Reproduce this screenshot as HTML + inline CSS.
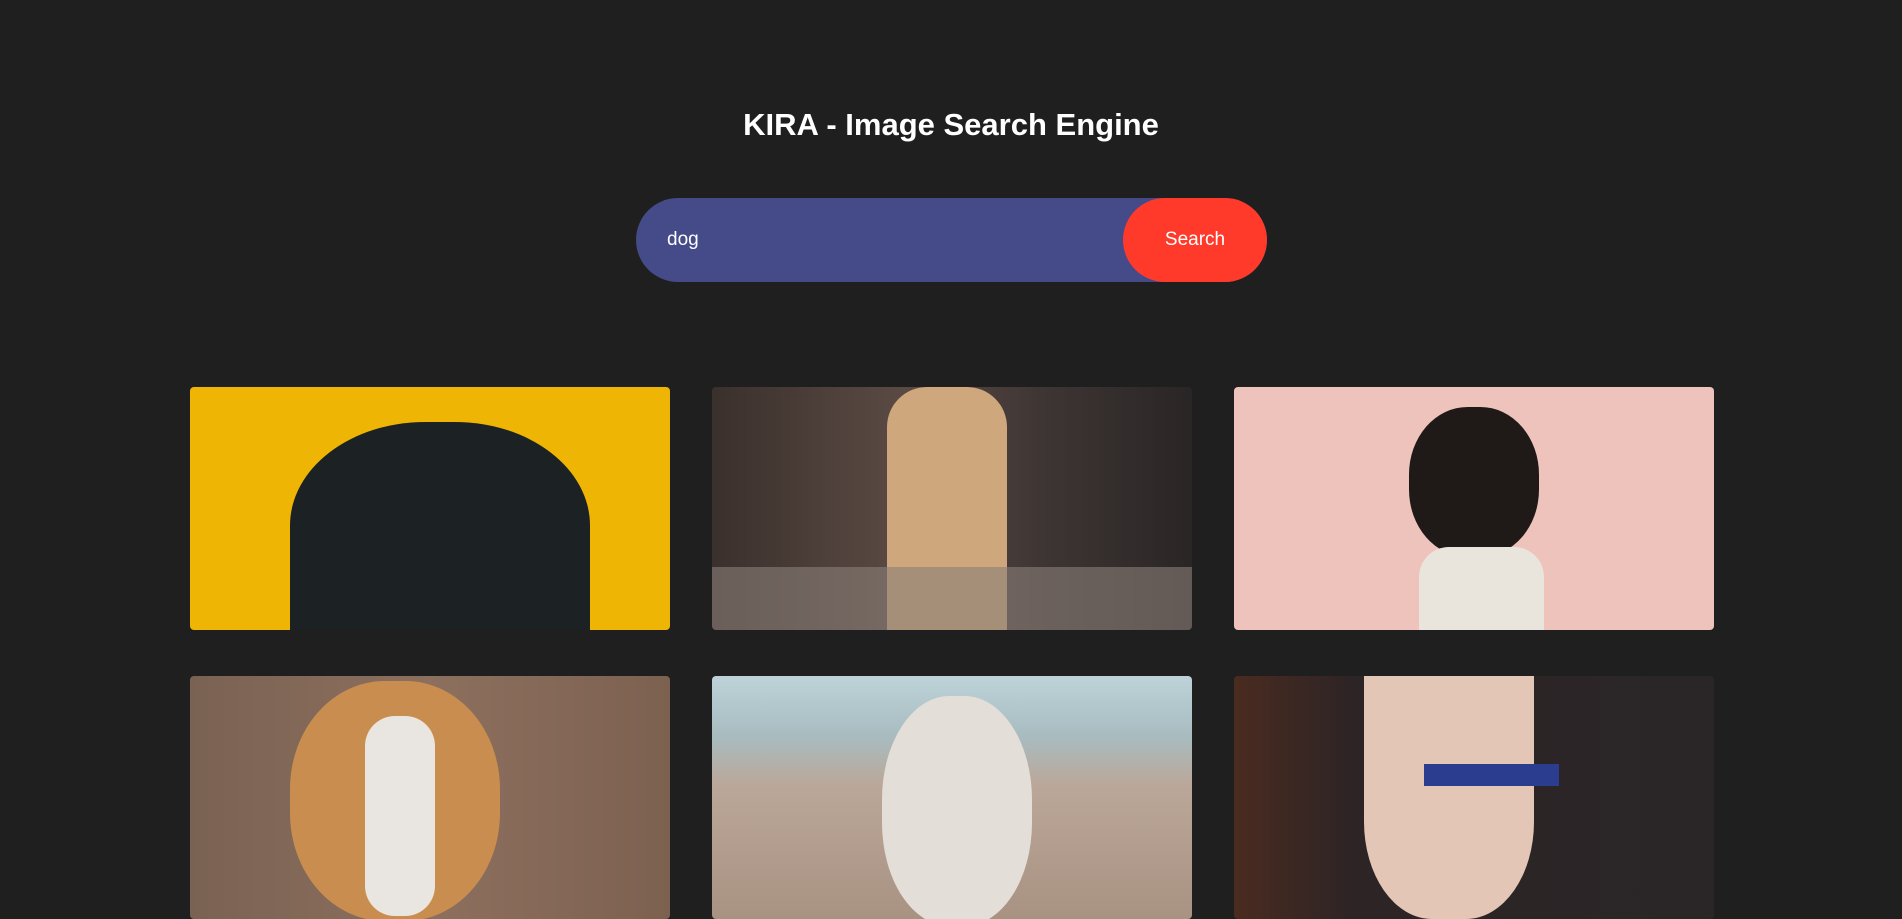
<!DOCTYPE html>
<html><head><meta charset="utf-8"><style>
html,body{margin:0;background:#1f1f1f;width:1902px;height:898px;overflow:hidden;font-family:"Liberation Sans",sans-serif}
h1{position:absolute;top:107px;left:0;width:1902px;text-align:center;margin:0;color:#fff;font-size:31px;font-weight:bold;letter-spacing:0}
.bar{position:absolute;left:636px;top:198px;width:631px;height:84px;border-radius:42px;background:#454a88}
.bar span{position:absolute;left:31px;top:31px;color:#fff;font-size:19px}
.btn{position:absolute;left:1123px;top:198px;width:144px;height:84px;border-radius:42px;background:#ff3a2b;color:#fff;font-size:19px;text-align:center;line-height:84px}
.img{position:absolute;width:480px;height:243px;border-radius:4px;overflow:hidden}
</style></head><body>
<h1>KIRA - Image Search Engine</h1>
<div class="bar"><span>dog</span></div>
<div class="btn">Search</div>
<div class="img" style="left:190px;top:387px;background:#efb505">
 <div style="position:absolute;left:100px;top:35px;width:300px;height:230px;border-radius:45% 45% 10% 10%;background:#1c2124"></div>
</div>
<div class="img" style="left:712px;top:387px;background:linear-gradient(90deg,#3a302c,#5b4a44 40%,#3d3533 70%,#2a2526)">
 <div style="position:absolute;left:175px;top:0;width:120px;height:243px;border-radius:40px 40px 0 0;background:#cfa77c"></div>
 <div style="position:absolute;left:0;top:180px;width:480px;height:63px;background:#8a7f78;opacity:.6"></div>
</div>
<div class="img" style="left:1234px;top:387px;background:#edc3bb">
 <div style="position:absolute;left:175px;top:20px;width:130px;height:150px;border-radius:45%;background:#1f1a18"></div>
 <div style="position:absolute;left:185px;top:160px;width:125px;height:90px;background:#e9e4dc;border-radius:30px 30px 0 0"></div>
</div>
<div class="img" style="left:190px;top:676px;background:linear-gradient(90deg,#7a6252,#8d6f5e 50%,#7d6150)">
 <div style="position:absolute;left:100px;top:5px;width:210px;height:240px;border-radius:45%;background:#c98e4f"></div>
 <div style="position:absolute;left:175px;top:40px;width:70px;height:200px;background:#e9e5e0;border-radius:30px"></div>
</div>
<div class="img" style="left:712px;top:676px;background:linear-gradient(180deg,#bdd3d9,#a8bcc0 25%,#bba799 45%,#a89282)">
 <div style="position:absolute;left:170px;top:20px;width:150px;height:230px;border-radius:45%;background:#e4ded8"></div>
</div>
<div class="img" style="left:1234px;top:676px;background:linear-gradient(90deg,#4a2b20,#2d2425 25%,#2a2628)">
 <div style="position:absolute;left:130px;top:0;width:170px;height:243px;border-radius:0 0 40% 40%;background:#e3c6b5"></div>
 <div style="position:absolute;left:190px;top:88px;width:135px;height:22px;background:#2a3d8f"></div>
</div>
</body></html>
